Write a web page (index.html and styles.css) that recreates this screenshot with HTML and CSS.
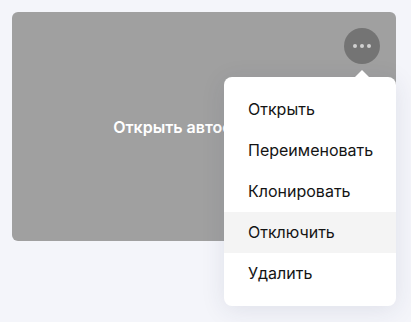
FILE: index.html
```html
<!DOCTYPE html>
<html lang="ru">
<head>
<meta charset="utf-8">
<link rel="stylesheet" href="styles.css">
</head>
<body>
<div class="page">
  <div class="card">
    <span class="card-title">Открыть автоответчик</span>
    <button class="more" aria-label="Меню">
      <span class="dot"></span><span class="dot"></span><span class="dot"></span>
    </button>
    <div class="menu">
      <div class="item">Открыть</div>
      <div class="item">Переименовать</div>
      <div class="item">Клонировать</div>
      <div class="item active">Отключить</div>
      <div class="item">Удалить</div>
    </div>
  </div>
</div>
</body>
</html>
```
FILE: styles.css
```css
html, body {
  margin: 0;
  padding: 0;
  background: #f4f5fa;
  font-family: Inter, "Noto Sans", sans-serif;
}
.page {
  padding: 12px 15px 12px 12px;
  height: 322px;
  box-sizing: border-box;
}
.card {
  position: relative;
  height: 229px;
  background: #a0a0a0;
  border-radius: 6px;
  display: flex;
  align-items: center;
  justify-content: center;
}
.card-title {
  color: #fff;
  font-size: 16px;
  font-weight: 600;
  margin-top: 1px;
}
.more {
  position: absolute;
  top: 16px;
  right: 16px;
  width: 36px;
  height: 36px;
  border-radius: 50%;
  border: 0;
  padding: 0;
  background: #747474;
  display: flex;
  align-items: center;
  justify-content: center;
  gap: 3px;
}
.dot {
  width: 4px;
  height: 4px;
  border-radius: 50%;
  background: #d0d0d0;
}
.menu {
  position: absolute;
  top: 65px;
  right: 0;
  width: 172px;
  padding: 12px 0;
  background: #fff;
  border-radius: 8px;
  box-shadow: 0 4px 24px rgba(40, 50, 90, 0.10);
}
.menu::before {
  content: "";
  position: absolute;
  top: -7px;
  right: 27px;
  border-left: 7px solid transparent;
  border-right: 7px solid transparent;
  border-bottom: 7px solid #fff;
}
.item {
  height: 41px;
  line-height: 41px;
  padding-left: 24px;
  font-size: 16px;
  color: #141414;
}
.item.active {
  background: #f4f4f4;
}
```
